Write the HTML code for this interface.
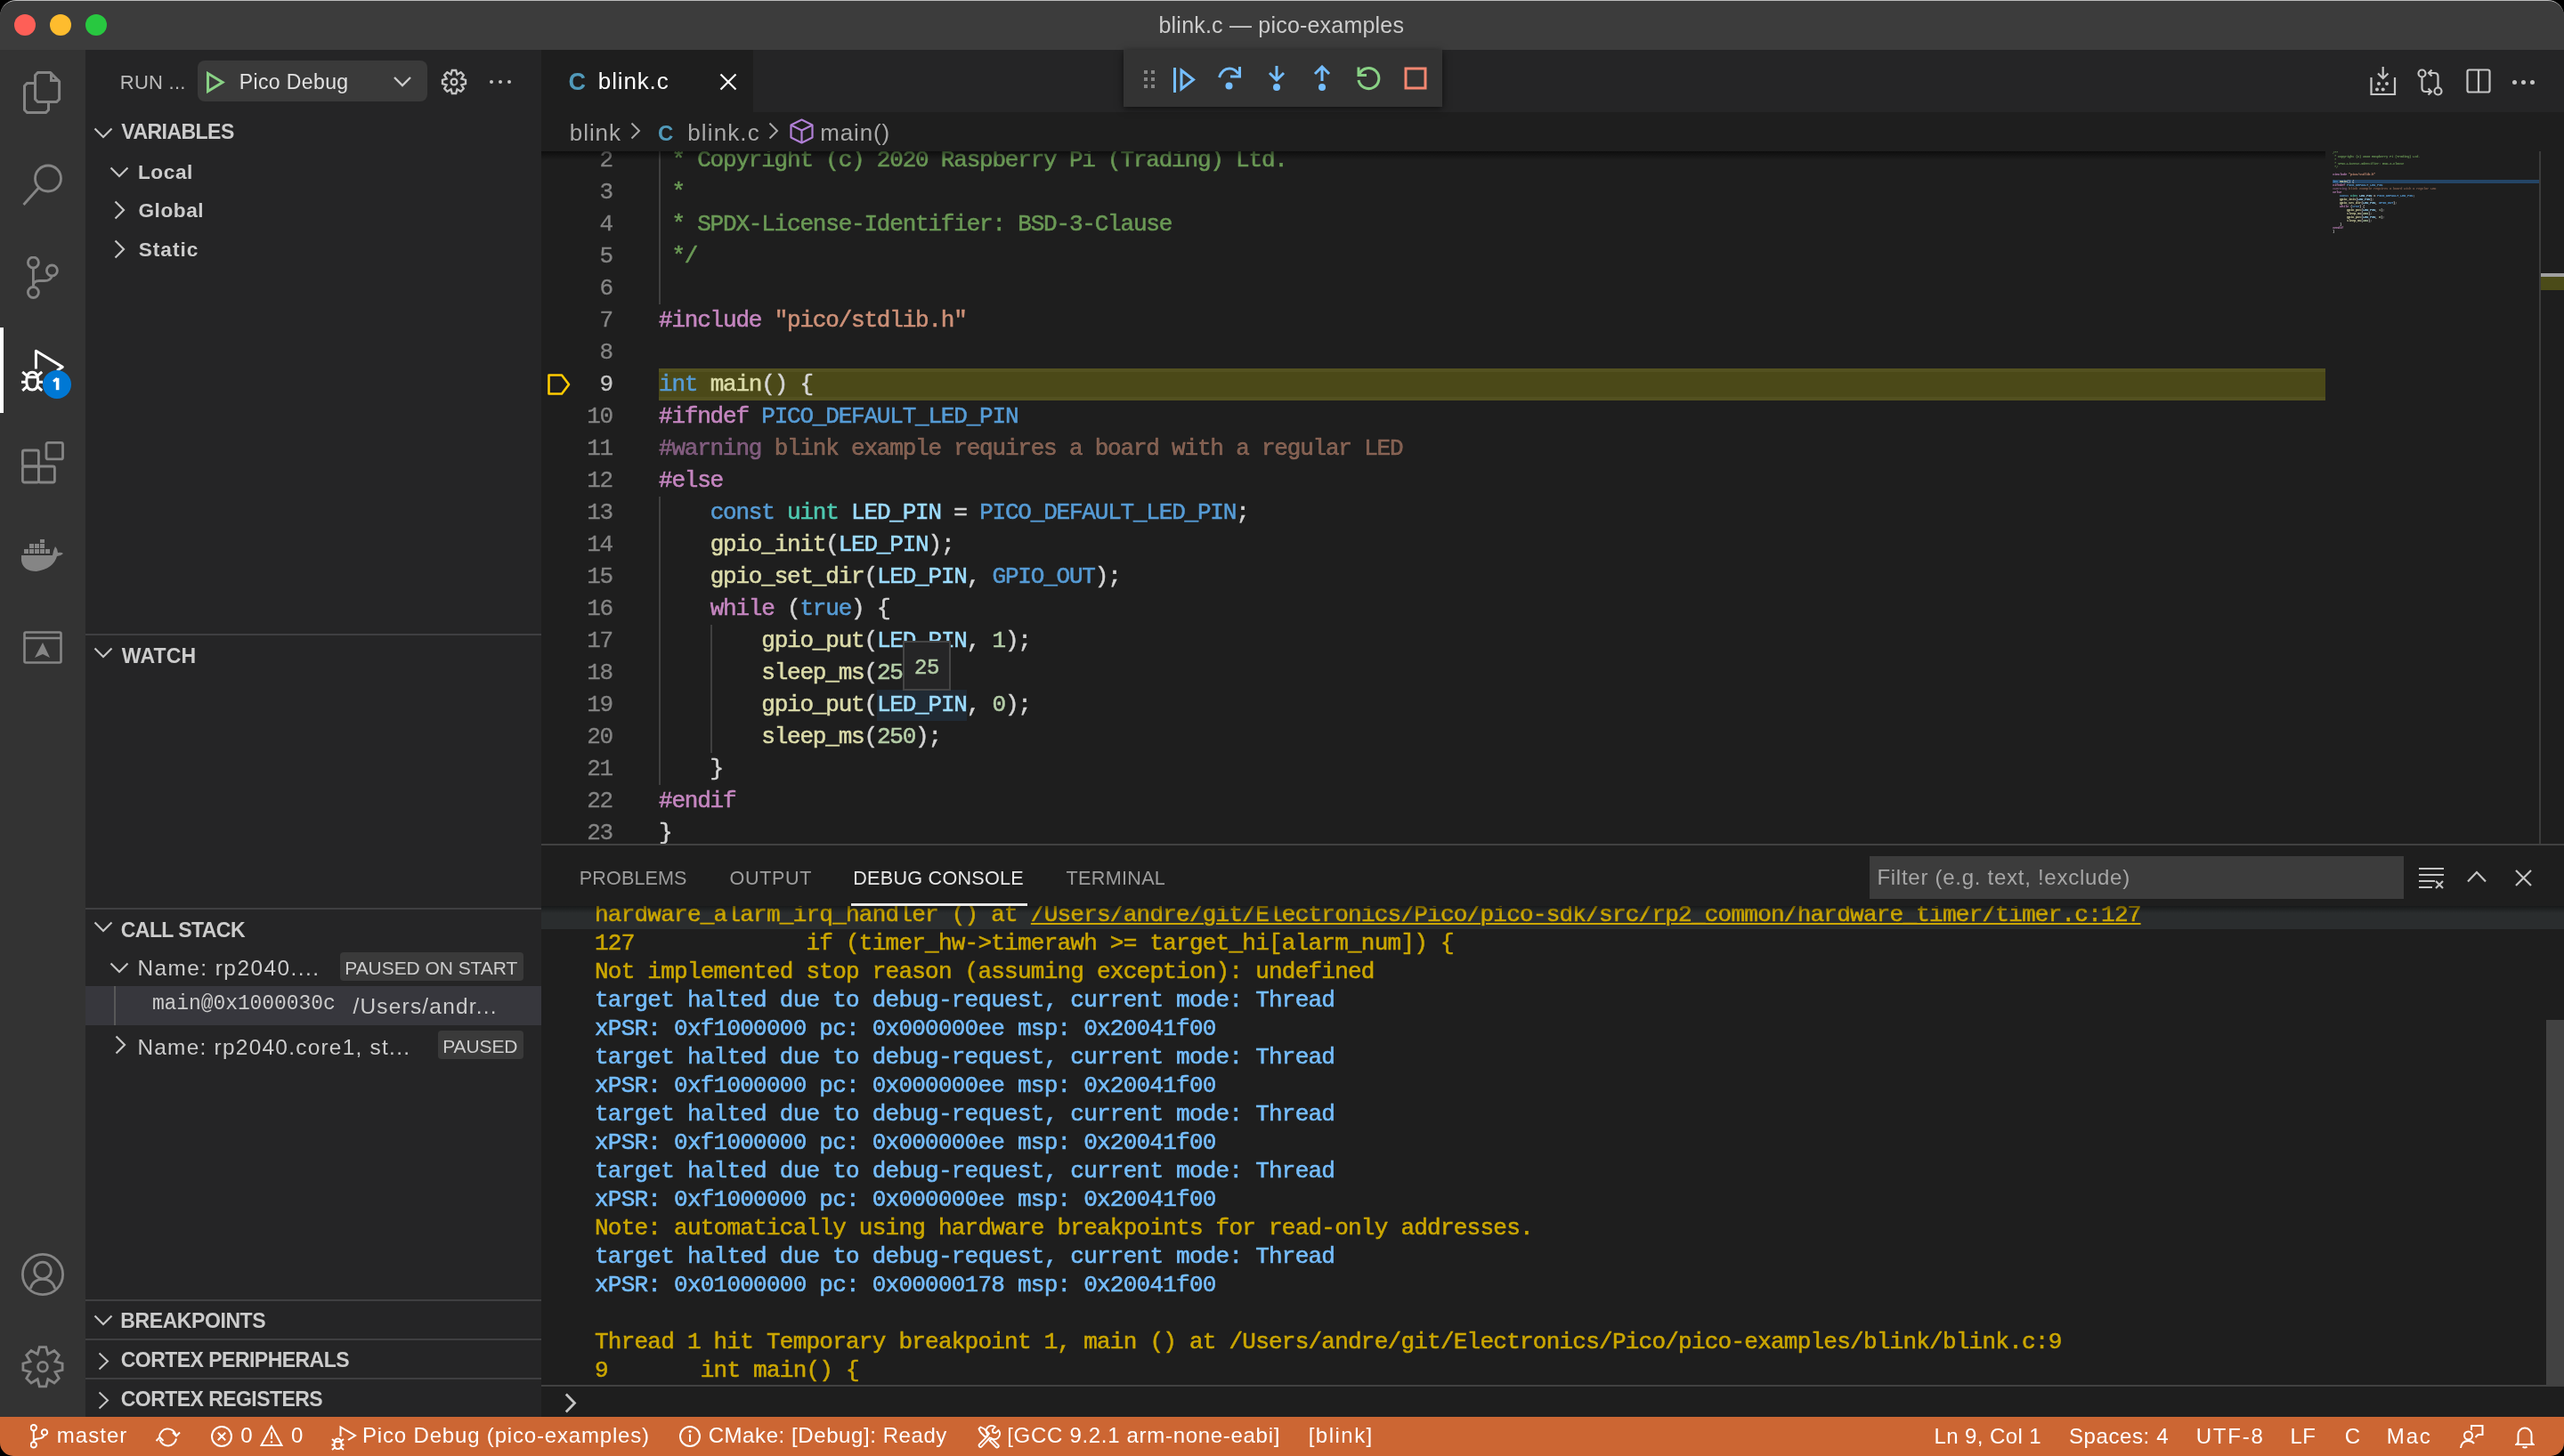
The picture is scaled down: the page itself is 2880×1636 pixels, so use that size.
<!DOCTYPE html>
<html><head><meta charset="utf-8"><title>blink.c — pico-examples</title>
<style>
html,body{margin:0;padding:0;background:#000;width:2880px;height:1636px;overflow:hidden;}
#win{will-change:transform;position:absolute;left:0;top:0;width:2880px;height:1636px;overflow:hidden;border-radius:18px 18px 15px 15px;background:#1e1e1e;}
#win div{box-sizing:border-box;}
</style></head><body><div id="win">
<div style="position:absolute;left:0px;top:0px;width:2880px;height:57px;background:#3c3c3c;"></div>
<div style="position:absolute;left:0;top:0;width:2880px;height:40px;border-top:1.6px solid #bcbcbc;border-radius:18px 18px 0 0;box-sizing:border-box;"></div>
<div style="position:absolute;left:0px;top:56px;width:2880px;height:1px;background:#2b2b2b;"></div>
<div style="position:absolute;left:16px;top:16px;width:24px;height:24px;border-radius:50%;background:#fe5f57;"></div>
<div style="position:absolute;left:56px;top:16px;width:24px;height:24px;border-radius:50%;background:#febc2e;"></div>
<div style="position:absolute;left:96px;top:16px;width:24px;height:24px;border-radius:50%;background:#28c840;"></div>
<div style="position:absolute;left:1301.50px;top:13.38px;font-family:'Liberation Sans', sans-serif;font-size:25px;line-height:30.12px;color:#cccccc;font-weight:normal;white-space:pre;letter-spacing:0.205px;">blink.c — pico-examples</div>
<div style="position:absolute;left:0px;top:56px;width:96px;height:1536px;background:#333333;"></div>
<svg style="position:absolute;left:24px;top:80px;" width="48" height="48" viewBox="0 0 48 48"><g fill="none" stroke="#858585" stroke-width="3" stroke-linejoin="miter">
<path d="M18.5 1.5 H32.5 L42.6 11.6 V31.5 L39.6 34.5 H18.5 L15.5 31.5 V4.5 Z"/>
<path d="M33.5 1.5 V10.5 H42.6"/>
<path d="M15.5 13.5 H6.5 L3.5 16.5 V43.5 L6.5 46.5 H27.5 L30.5 43.5 V34.5"/>
</g></svg>
<svg style="position:absolute;left:24px;top:184px;" width="48" height="48" viewBox="0 0 48 48"><g fill="none" stroke="#858585" stroke-width="2.8">
<circle cx="30" cy="16.5" r="14.5"/><path d="M19.5 27 L2.5 46" stroke-linecap="butt"/></g></svg>
<svg style="position:absolute;left:24px;top:288px;" width="48" height="48" viewBox="0 0 48 48"><g fill="none" stroke="#858585" stroke-width="2.8">
<circle cx="13.4" cy="7" r="6"/><circle cx="13.4" cy="40.5" r="6"/><circle cx="34.4" cy="16" r="6"/>
<path d="M13.4 13 V34.5"/><path d="M34.4 22 Q33 27.5 26 27.5 H20 Q13.4 27.5 13.4 33"/></g></svg>
<div style="position:absolute;left:0px;top:368px;width:4px;height:96px;background:#ffffff;"></div>
<svg style="position:absolute;left:24px;top:392px;" width="48" height="48" viewBox="0 0 48 48"><g fill="none" stroke="#ffffff" stroke-width="3" stroke-linejoin="round" stroke-linecap="butt">
<path d="M16.4 22.5 V2.2 L46.2 20.4 L40 24.2"/>
</g>
<g fill="none" stroke="#ffffff" stroke-width="3">
<path d="M5.8 36.5 Q5.8 26.2 12.2 26.2 Q18.6 26.2 18.6 36.5 Q18.6 46 12.2 46 Q5.8 46 5.8 36.5 Z"/>
<path d="M6.2 31.8 H18.2"/>
<path d="M0 37.3 H5.8 M18.6 37.3 H24 M1.2 25.8 L6.2 30.2 M23.2 25.8 L18.2 30.2 M1.2 46.8 L6.2 42.4 M23.2 46.8 L18.2 42.4"/>
</g></svg>
<div style="position:absolute;left:48.1px;top:416px;width:32px;height:32px;border-radius:50%;background:#0078d4;"></div>
<svg style="position:absolute;left:59px;top:424px;" width="9" height="15" viewBox="0 0 9 15"><path d="M5.6 0.8 V14.2" stroke="#ffffff" stroke-width="3.6" fill="none"/><path d="M1 4.6 L5.2 1.2" stroke="#ffffff" stroke-width="2.8" fill="none"/></svg>
<svg style="position:absolute;left:24px;top:496px;" width="48" height="48" viewBox="0 0 48 48"><g fill="none" stroke="#858585" stroke-width="2.8" stroke-linejoin="round">
<rect x="1.4" y="10" width="18" height="18" rx="2"/><rect x="1.4" y="28" width="18" height="18" rx="2"/><rect x="19.4" y="28" width="18" height="18" rx="2"/>
<rect x="28" y="1.4" width="18.5" height="18.5" rx="2"/></g></svg>
<svg style="position:absolute;left:23px;top:606px;" width="50" height="38" viewBox="0 0 50 38"><g fill="#858585">
<rect x="4" y="11" width="5" height="5"/><rect x="10" y="11" width="5" height="5"/><rect x="16" y="11" width="5" height="5"/><rect x="22" y="11" width="5" height="5"/><rect x="28" y="11" width="5" height="5"/>
<rect x="10" y="5" width="5" height="5"/><rect x="16" y="5" width="5" height="5"/><rect x="22" y="5" width="5" height="5"/><rect x="22" y="-1" width="5" height="5"/>
<path d="M1 18 H36 Q37 12 39 8 Q42 11 42 15 Q46 14 48 16 Q45 19 41 19 Q37 33 18 36 Q3 36 1 24 Z"/></g></svg>
<svg style="position:absolute;left:26px;top:709px;" width="46" height="38" viewBox="0 0 46 38"><g fill="none" stroke="#858585" stroke-width="2.6">
<rect x="1.5" y="1.5" width="41" height="34" rx="1.5"/><path d="M1.5 8 H42.5"/></g>
<path d="M22 13 L30 30 L22 26 L13 30 Z" fill="#858585"/></svg>
<svg style="position:absolute;left:24px;top:1408px;" width="48" height="48" viewBox="0 0 48 48"><g fill="none" stroke="#858585" stroke-width="2.8">
<circle cx="24" cy="24" r="22.6"/><circle cx="24" cy="19.5" r="9.3"/><path d="M10.2 40 Q13 29.4 24 29.4 Q35 29.4 37.8 40"/></g></svg>
<svg style="position:absolute;left:24px;top:1512px;" width="48" height="48" viewBox="0 0 48 48"><g fill="none" stroke="#858585" stroke-width="2.8" stroke-linejoin="miter" stroke-miterlimit="6">
<path d="M20.30 1.61 L27.70 1.61 L29.82 9.66 L37.01 5.46 L42.24 10.69 L38.04 17.88 L46.09 20.00 L46.09 27.40 L38.04 29.52 L42.24 36.71 L37.01 41.94 L29.82 37.74 L27.70 45.79 L20.30 45.79 L18.18 37.74 L10.99 41.94 L5.76 36.71 L9.96 29.52 L1.91 27.40 L1.91 20.00 L9.96 17.88 L5.76 10.69 L10.99 5.46 L18.18 9.66 Z"/>
<circle cx="24" cy="23.7" r="5.4"/></g></svg>
<div style="position:absolute;left:96px;top:56px;width:512px;height:1536px;background:#252526;"></div>
<div style="position:absolute;left:134.85px;top:79.69px;font-family:'Liberation Sans', sans-serif;font-size:22px;line-height:26.51px;color:#bbbbbb;font-weight:normal;white-space:pre;letter-spacing:0.233px;">RUN ...</div>
<div style="position:absolute;left:222px;top:68px;width:258px;height:46px;border-radius:8px;background:#3a3a3a;"></div>
<svg style="position:absolute;left:231px;top:80px;" width="22" height="26" viewBox="0 0 22 26"><path d="M2.5 2.5 L19 12.5 L2.5 22.5 Z" fill="none" stroke="#89d185" stroke-width="3" stroke-linejoin="miter"/></svg>
<div style="position:absolute;left:268.65px;top:78.78px;font-family:'Liberation Sans', sans-serif;font-size:23px;line-height:27.71px;color:#e2e2e2;font-weight:normal;white-space:pre;letter-spacing:0.400px;">Pico Debug</div>
<svg style="position:absolute;left:442px;top:86px;" width="20" height="12" viewBox="0 0 20 12"><path d="M1 1 L10 10 L19 1" fill="none" stroke="#cccccc" stroke-width="2.4"/></svg>
<svg style="position:absolute;left:495px;top:77px;" width="30" height="30" viewBox="0 0 30 30"><g fill="none" stroke="#c5c5c5" stroke-width="2.3" stroke-linejoin="miter" stroke-miterlimit="6">
<path d="M12.82 1.98 L17.18 1.98 L18.44 6.69 L22.67 4.25 L25.75 7.33 L23.31 11.56 L28.02 12.82 L28.02 17.18 L23.31 18.44 L25.75 22.67 L22.67 25.75 L18.44 23.31 L17.18 28.02 L12.82 28.02 L11.56 23.31 L7.33 25.75 L4.25 22.67 L6.69 18.44 L1.98 17.18 L1.98 12.82 L6.69 11.56 L4.25 7.33 L7.33 4.25 L11.56 6.69 Z"/>
<circle cx="15" cy="15" r="3.4"/></g></svg>
<div style="position:absolute;left:549.7px;top:89.7px;width:4.6px;height:4.6px;border-radius:50%;background:#c5c5c5;"></div>
<div style="position:absolute;left:559.7px;top:89.7px;width:4.6px;height:4.6px;border-radius:50%;background:#c5c5c5;"></div>
<div style="position:absolute;left:569.7px;top:89.7px;width:4.6px;height:4.6px;border-radius:50%;background:#c5c5c5;"></div>
<svg style="position:absolute;left:105px;top:143px;" width="22" height="14" viewBox="0 0 22 14"><path d="M1.5 1.5 L11 11 L20.5 1.5" fill="none" stroke="#c5c5c5" stroke-width="2.2"/></svg>
<div style="position:absolute;left:136.35px;top:135.19px;font-family:'Liberation Sans', sans-serif;font-size:23px;line-height:27.71px;color:#cccccc;font-weight:bold;white-space:pre;letter-spacing:-0.537px;">VARIABLES</div>
<svg style="position:absolute;left:123px;top:187px;" width="22" height="14" viewBox="0 0 22 14"><path d="M1.5 1.5 L11 11 L20.5 1.5" fill="none" stroke="#c5c5c5" stroke-width="2.2"/></svg>
<div style="position:absolute;left:154.90px;top:179.55px;font-family:'Liberation Sans', sans-serif;font-size:22.6px;line-height:27.23px;color:#cccccc;font-weight:bold;white-space:pre;letter-spacing:0.612px;">Local</div>
<svg style="position:absolute;left:128px;top:225px;" width="14" height="22" viewBox="0 0 14 22"><path d="M1.5 1.5 L11 11 L1.5 20.5" fill="none" stroke="#c5c5c5" stroke-width="2.2"/></svg>
<div style="position:absolute;left:155.40px;top:223.15px;font-family:'Liberation Sans', sans-serif;font-size:22.6px;line-height:27.23px;color:#cccccc;font-weight:bold;white-space:pre;letter-spacing:0.580px;">Global</div>
<svg style="position:absolute;left:128px;top:269px;" width="14" height="22" viewBox="0 0 14 22"><path d="M1.5 1.5 L11 11 L1.5 20.5" fill="none" stroke="#c5c5c5" stroke-width="2.2"/></svg>
<div style="position:absolute;left:155.65px;top:267.35px;font-family:'Liberation Sans', sans-serif;font-size:22.6px;line-height:27.23px;color:#cccccc;font-weight:bold;white-space:pre;letter-spacing:1.030px;">Static</div>
<div style="position:absolute;left:96px;top:712px;width:512px;height:2px;background:#3f3f41;"></div>
<svg style="position:absolute;left:105px;top:727px;" width="22" height="14" viewBox="0 0 22 14"><path d="M1.5 1.5 L11 11 L20.5 1.5" fill="none" stroke="#c5c5c5" stroke-width="2.2"/></svg>
<div style="position:absolute;left:136.80px;top:723.58px;font-family:'Liberation Sans', sans-serif;font-size:23px;line-height:27.71px;color:#cccccc;font-weight:bold;white-space:pre;letter-spacing:0.175px;">WATCH</div>
<div style="position:absolute;left:96px;top:1020px;width:512px;height:2px;background:#3f3f41;"></div>
<svg style="position:absolute;left:105px;top:1035px;" width="22" height="14" viewBox="0 0 22 14"><path d="M1.5 1.5 L11 11 L20.5 1.5" fill="none" stroke="#c5c5c5" stroke-width="2.2"/></svg>
<div style="position:absolute;left:135.80px;top:1031.59px;font-family:'Liberation Sans', sans-serif;font-size:23px;line-height:27.71px;color:#cccccc;font-weight:bold;white-space:pre;letter-spacing:-0.567px;">CALL STACK</div>
<svg style="position:absolute;left:123px;top:1081px;" width="22" height="14" viewBox="0 0 22 14"><path d="M1.5 1.5 L11 11 L20.5 1.5" fill="none" stroke="#c5c5c5" stroke-width="2.2"/></svg>
<div style="position:absolute;left:154.40px;top:1073.42px;font-family:'Liberation Sans', sans-serif;font-size:24.4px;line-height:29.40px;color:#cccccc;font-weight:normal;white-space:pre;letter-spacing:1.463px;">Name: rp2040....</div>
<div style="position:absolute;left:382px;top:1070px;width:206px;height:32px;border-radius:4px;background:#3a3a3a;"></div>
<div style="position:absolute;left:387.25px;top:1074.99px;font-family:'Liberation Sans', sans-serif;font-size:21px;line-height:25.30px;color:#cccccc;font-weight:normal;white-space:pre;letter-spacing:-0.057px;">PAUSED ON START</div>
<div style="position:absolute;left:96px;top:1108px;width:512px;height:44px;background:#37373d;"></div>
<div style="position:absolute;left:128px;top:1108px;width:2px;height:44px;background:#585858;"></div>
<div style="position:absolute;left:170.90px;top:1115.04px;font-family:'Liberation Mono', monospace;font-size:23px;line-height:26.06px;color:#cccccc;font-weight:normal;white-space:pre;letter-spacing:-0.089px;">main@0x1000030c</div>
<div style="position:absolute;left:396.50px;top:1116.42px;font-family:'Liberation Sans', sans-serif;font-size:24.4px;line-height:29.40px;color:#cccccc;font-weight:normal;white-space:pre;letter-spacing:1.231px;">/Users/andr...</div>
<svg style="position:absolute;left:129px;top:1163px;" width="14" height="22" viewBox="0 0 14 22"><path d="M1.5 1.5 L11 11 L1.5 20.5" fill="none" stroke="#c5c5c5" stroke-width="2.2"/></svg>
<div style="position:absolute;left:154.40px;top:1161.92px;font-family:'Liberation Sans', sans-serif;font-size:24.4px;line-height:29.40px;color:#cccccc;font-weight:normal;white-space:pre;letter-spacing:1.265px;">Name: rp2040.core1, st...</div>
<div style="position:absolute;left:492px;top:1158px;width:96px;height:32px;border-radius:4px;background:#3a3a3a;"></div>
<div style="position:absolute;left:497.25px;top:1162.99px;font-family:'Liberation Sans', sans-serif;font-size:21px;line-height:25.30px;color:#cccccc;font-weight:normal;white-space:pre;letter-spacing:-0.110px;">PAUSED</div>
<div style="position:absolute;left:96px;top:1460px;width:512px;height:2px;background:#3f3f41;"></div>
<svg style="position:absolute;left:105px;top:1477px;" width="22" height="14" viewBox="0 0 22 14"><path d="M1.5 1.5 L11 11 L20.5 1.5" fill="none" stroke="#c5c5c5" stroke-width="2.2"/></svg>
<div style="position:absolute;left:135.30px;top:1471.18px;font-family:'Liberation Sans', sans-serif;font-size:23px;line-height:27.71px;color:#cccccc;font-weight:bold;white-space:pre;letter-spacing:-0.410px;">BREAKPOINTS</div>
<div style="position:absolute;left:96px;top:1504px;width:512px;height:2px;background:#3f3f41;"></div>
<svg style="position:absolute;left:110px;top:1519px;" width="13" height="21" viewBox="0 0 13 21"><path d="M1.5 1.5 L11 10.5 L1.5 19.5" fill="none" stroke="#c5c5c5" stroke-width="2"/></svg>
<div style="position:absolute;left:135.80px;top:1515.18px;font-family:'Liberation Sans', sans-serif;font-size:23px;line-height:27.71px;color:#cccccc;font-weight:bold;white-space:pre;letter-spacing:-0.535px;">CORTEX PERIPHERALS</div>
<div style="position:absolute;left:96px;top:1548px;width:512px;height:2px;background:#3f3f41;"></div>
<svg style="position:absolute;left:110px;top:1563px;" width="13" height="21" viewBox="0 0 13 21"><path d="M1.5 1.5 L11 10.5 L1.5 19.5" fill="none" stroke="#c5c5c5" stroke-width="2"/></svg>
<div style="position:absolute;left:135.80px;top:1559.18px;font-family:'Liberation Sans', sans-serif;font-size:23px;line-height:27.71px;color:#cccccc;font-weight:bold;white-space:pre;letter-spacing:-0.557px;">CORTEX REGISTERS</div>
<div style="position:absolute;left:608px;top:56px;width:2272px;height:892px;background:#1e1e1e;"></div>
<div style="position:absolute;left:608px;top:56px;width:2272px;height:70px;background:#252526;"></div>
<div style="position:absolute;left:608px;top:56px;width:238px;height:70px;background:#1e1e1e;"></div>
<div style="position:absolute;left:638.50px;top:75.97px;font-family:'Liberation Sans', sans-serif;font-size:27px;line-height:32.54px;color:#519aba;font-weight:bold;white-space:pre;letter-spacing:-1.650px;">C</div>
<div style="position:absolute;left:671.85px;top:76.47px;font-family:'Liberation Sans', sans-serif;font-size:26px;line-height:31.33px;color:#ffffff;font-weight:normal;white-space:pre;letter-spacing:0.858px;">blink.c</div>
<svg style="position:absolute;left:808px;top:82px;" width="20" height="20" viewBox="0 0 20 20"><path d="M1.5 1.5 L18.5 18.5 M18.5 1.5 L1.5 18.5" fill="none" stroke="#ffffff" stroke-width="2.2"/></svg>
<svg style="position:absolute;left:2662px;top:74px;" width="30" height="34" viewBox="0 0 30 34"><g fill="none" stroke="#c5c5c5" stroke-width="2.2">
<path d="M1.5 13 V32 H28 V13"/><path d="M14.7 1 V14 M9 8.5 L14.7 14 L20.5 8.5"/></g>
<g fill="#c5c5c5"><circle cx="10" cy="20" r="2"/><circle cx="19" cy="20" r="2"/><circle cx="8" cy="26.5" r="2"/><circle cx="14.7" cy="26.5" r="2"/></g></svg>
<svg style="position:absolute;left:2715px;top:77px;" width="30" height="32" viewBox="0 0 30 32"><g fill="none" stroke="#c5c5c5" stroke-width="2.2">
<circle cx="5.5" cy="5.5" r="4"/><circle cx="23.5" cy="25.5" r="4"/>
<path d="M5.5 9.5 V22 Q5.5 26 9.5 26 H16 M12.5 22.5 L16 26 L12.5 29.5"/>
<path d="M23.5 21.5 V9 Q23.5 5 19.5 5 H13 M16.5 1.5 L13 5 L16.5 8.5"/></g></svg>
<svg style="position:absolute;left:2770px;top:77px;" width="28" height="28" viewBox="0 0 28 28"><g fill="none" stroke="#c5c5c5" stroke-width="2.2"><rect x="1.5" y="1.5" width="25" height="25" rx="2"/><path d="M14 1.5 V26.5"/></g></svg>
<div style="position:absolute;left:2821.5px;top:89.5px;width:5px;height:5px;border-radius:50%;background:#c5c5c5;"></div>
<div style="position:absolute;left:2831.5px;top:89.5px;width:5px;height:5px;border-radius:50%;background:#c5c5c5;"></div>
<div style="position:absolute;left:2841.5px;top:89.5px;width:5px;height:5px;border-radius:50%;background:#c5c5c5;"></div>
<div style="position:absolute;left:639.85px;top:134.47px;font-family:'Liberation Sans', sans-serif;font-size:26px;line-height:31.33px;color:#a9a9a9;font-weight:normal;white-space:pre;letter-spacing:0.912px;">blink</div>
<svg style="position:absolute;left:708px;top:137px;" width="12" height="20" viewBox="0 0 12 20"><path d="M1.5 1.5 L10 10 L1.5 18.5" fill="none" stroke="#a9a9a9" stroke-width="2"/></svg>
<div style="position:absolute;left:739.00px;top:136.28px;font-family:'Liberation Sans', sans-serif;font-size:24px;line-height:28.92px;color:#519aba;font-weight:bold;white-space:pre;letter-spacing:0.950px;">C</div>
<div style="position:absolute;left:772.25px;top:134.47px;font-family:'Liberation Sans', sans-serif;font-size:26px;line-height:31.33px;color:#a9a9a9;font-weight:normal;white-space:pre;letter-spacing:1.125px;">blink.c</div>
<svg style="position:absolute;left:863px;top:137px;" width="12" height="20" viewBox="0 0 12 20"><path d="M1.5 1.5 L10 10 L1.5 18.5" fill="none" stroke="#a9a9a9" stroke-width="2"/></svg>
<svg style="position:absolute;left:887px;top:133px;" width="27" height="29" viewBox="0 0 27 29"><g fill="none" stroke="#b180d7" stroke-width="2.2" stroke-linejoin="round">
<path d="M13.5 1.5 L25.5 7.5 V21.5 L13.5 27.5 L1.5 21.5 V7.5 Z"/><path d="M1.5 7.5 L13.5 13.5 L25.5 7.5 M13.5 13.5 V27.5"/></g></svg>
<div style="position:absolute;left:921.25px;top:134.47px;font-family:'Liberation Sans', sans-serif;font-size:26px;line-height:31.33px;color:#a9a9a9;font-weight:normal;white-space:pre;letter-spacing:0.830px;">main()</div>
<div style="position:absolute;left:608px;top:170px;width:2004px;height:778px;overflow:hidden;">
<div style="position:absolute;left:132px;top:244px;width:1872px;height:36px;background:#4b4918;border-top:4px solid #535120;border-bottom:4px solid #535120;box-sizing:border-box;"></div>
<div style="position:absolute;left:376.8px;top:605px;width:100.8px;height:35px;background:#202a34;"></div>
<div style="position:absolute;left:132px;top:0px;width:2px;height:172px;background:#404040;"></div>
<div style="position:absolute;left:132px;top:388px;width:2px;height:324px;background:#404040;"></div>
<div style="position:absolute;left:189.6px;top:532px;width:2px;height:144px;background:#404040;"></div>
<div style="position:absolute;left:0px;top:-3.66px;width:80px;text-align:right;font-family:'Liberation Mono', monospace;-webkit-text-stroke-width:0.3px;font-size:26px;line-height:29.46px;letter-spacing:-1.2px;color:#858585;white-space:pre;">2<span style="letter-spacing:0">​</span></div>
<div style="position:absolute;left:132px;top:-3.66px;font-family:'Liberation Mono', monospace;-webkit-text-stroke-width:0.55px;font-size:26px;line-height:29.46px;letter-spacing:-1.2px;white-space:pre;"><span style="color:#6a9955"> * Copyright (c) 2020 Raspberry Pi (Trading) Ltd.</span></div>
<div style="position:absolute;left:0px;top:32.34px;width:80px;text-align:right;font-family:'Liberation Mono', monospace;-webkit-text-stroke-width:0.3px;font-size:26px;line-height:29.46px;letter-spacing:-1.2px;color:#858585;white-space:pre;">3<span style="letter-spacing:0">​</span></div>
<div style="position:absolute;left:132px;top:32.34px;font-family:'Liberation Mono', monospace;-webkit-text-stroke-width:0.55px;font-size:26px;line-height:29.46px;letter-spacing:-1.2px;white-space:pre;"><span style="color:#6a9955"> *</span></div>
<div style="position:absolute;left:0px;top:68.34px;width:80px;text-align:right;font-family:'Liberation Mono', monospace;-webkit-text-stroke-width:0.3px;font-size:26px;line-height:29.46px;letter-spacing:-1.2px;color:#858585;white-space:pre;">4<span style="letter-spacing:0">​</span></div>
<div style="position:absolute;left:132px;top:68.34px;font-family:'Liberation Mono', monospace;-webkit-text-stroke-width:0.55px;font-size:26px;line-height:29.46px;letter-spacing:-1.2px;white-space:pre;"><span style="color:#6a9955"> * SPDX-License-Identifier: BSD-3-Clause</span></div>
<div style="position:absolute;left:0px;top:104.34px;width:80px;text-align:right;font-family:'Liberation Mono', monospace;-webkit-text-stroke-width:0.3px;font-size:26px;line-height:29.46px;letter-spacing:-1.2px;color:#858585;white-space:pre;">5<span style="letter-spacing:0">​</span></div>
<div style="position:absolute;left:132px;top:104.34px;font-family:'Liberation Mono', monospace;-webkit-text-stroke-width:0.55px;font-size:26px;line-height:29.46px;letter-spacing:-1.2px;white-space:pre;"><span style="color:#6a9955"> */</span></div>
<div style="position:absolute;left:0px;top:140.34px;width:80px;text-align:right;font-family:'Liberation Mono', monospace;-webkit-text-stroke-width:0.3px;font-size:26px;line-height:29.46px;letter-spacing:-1.2px;color:#858585;white-space:pre;">6<span style="letter-spacing:0">​</span></div>
<div style="position:absolute;left:132px;top:140.34px;font-family:'Liberation Mono', monospace;-webkit-text-stroke-width:0.55px;font-size:26px;line-height:29.46px;letter-spacing:-1.2px;white-space:pre;"></div>
<div style="position:absolute;left:0px;top:176.34px;width:80px;text-align:right;font-family:'Liberation Mono', monospace;-webkit-text-stroke-width:0.3px;font-size:26px;line-height:29.46px;letter-spacing:-1.2px;color:#858585;white-space:pre;">7<span style="letter-spacing:0">​</span></div>
<div style="position:absolute;left:132px;top:176.34px;font-family:'Liberation Mono', monospace;-webkit-text-stroke-width:0.55px;font-size:26px;line-height:29.46px;letter-spacing:-1.2px;white-space:pre;"><span style="color:#c586c0">#include</span><span style="color:#d4d4d4"> </span><span style="color:#ce9178">&quot;pico/stdlib.h&quot;</span></div>
<div style="position:absolute;left:0px;top:212.34px;width:80px;text-align:right;font-family:'Liberation Mono', monospace;-webkit-text-stroke-width:0.3px;font-size:26px;line-height:29.46px;letter-spacing:-1.2px;color:#858585;white-space:pre;">8<span style="letter-spacing:0">​</span></div>
<div style="position:absolute;left:132px;top:212.34px;font-family:'Liberation Mono', monospace;-webkit-text-stroke-width:0.55px;font-size:26px;line-height:29.46px;letter-spacing:-1.2px;white-space:pre;"></div>
<div style="position:absolute;left:0px;top:248.34px;width:80px;text-align:right;font-family:'Liberation Mono', monospace;-webkit-text-stroke-width:0.3px;font-size:26px;line-height:29.46px;letter-spacing:-1.2px;color:#c6c6c6;white-space:pre;">9<span style="letter-spacing:0">​</span></div>
<div style="position:absolute;left:132px;top:248.34px;font-family:'Liberation Mono', monospace;-webkit-text-stroke-width:0.55px;font-size:26px;line-height:29.46px;letter-spacing:-1.2px;white-space:pre;"><span style="color:#569cd6">int</span><span style="color:#d4d4d4"> </span><span style="color:#dcdcaa">main</span><span style="color:#d4d4d4">() {</span></div>
<div style="position:absolute;left:0px;top:284.34px;width:80px;text-align:right;font-family:'Liberation Mono', monospace;-webkit-text-stroke-width:0.3px;font-size:26px;line-height:29.46px;letter-spacing:-1.2px;color:#858585;white-space:pre;">10<span style="letter-spacing:0">​</span></div>
<div style="position:absolute;left:132px;top:284.34px;font-family:'Liberation Mono', monospace;-webkit-text-stroke-width:0.55px;font-size:26px;line-height:29.46px;letter-spacing:-1.2px;white-space:pre;"><span style="color:#c586c0">#ifndef</span><span style="color:#d4d4d4"> </span><span style="color:#569cd6">PICO_DEFAULT_LED_PIN</span></div>
<div style="position:absolute;left:0px;top:320.34px;width:80px;text-align:right;font-family:'Liberation Mono', monospace;-webkit-text-stroke-width:0.3px;font-size:26px;line-height:29.46px;letter-spacing:-1.2px;color:#858585;white-space:pre;">11<span style="letter-spacing:0">​</span></div>
<div style="position:absolute;left:132px;top:320.34px;font-family:'Liberation Mono', monospace;-webkit-text-stroke-width:0.55px;font-size:26px;line-height:29.46px;letter-spacing:-1.2px;white-space:pre;"><span style="color:rgba(197,134,192,0.55)">#warning</span><span style="color:#d4d4d4"> </span><span style="color:rgba(206,145,120,0.55)">blink example requires a board with a regular LED</span></div>
<div style="position:absolute;left:0px;top:356.34px;width:80px;text-align:right;font-family:'Liberation Mono', monospace;-webkit-text-stroke-width:0.3px;font-size:26px;line-height:29.46px;letter-spacing:-1.2px;color:#858585;white-space:pre;">12<span style="letter-spacing:0">​</span></div>
<div style="position:absolute;left:132px;top:356.34px;font-family:'Liberation Mono', monospace;-webkit-text-stroke-width:0.55px;font-size:26px;line-height:29.46px;letter-spacing:-1.2px;white-space:pre;"><span style="color:#c586c0">#else</span></div>
<div style="position:absolute;left:0px;top:392.34px;width:80px;text-align:right;font-family:'Liberation Mono', monospace;-webkit-text-stroke-width:0.3px;font-size:26px;line-height:29.46px;letter-spacing:-1.2px;color:#858585;white-space:pre;">13<span style="letter-spacing:0">​</span></div>
<div style="position:absolute;left:132px;top:392.34px;font-family:'Liberation Mono', monospace;-webkit-text-stroke-width:0.55px;font-size:26px;line-height:29.46px;letter-spacing:-1.2px;white-space:pre;"><span style="color:#d4d4d4">    </span><span style="color:#569cd6">const</span><span style="color:#d4d4d4"> </span><span style="color:#4ec9b0">uint</span><span style="color:#d4d4d4"> </span><span style="color:#9cdcfe">LED_PIN</span><span style="color:#d4d4d4"> = </span><span style="color:#569cd6">PICO_DEFAULT_LED_PIN</span><span style="color:#d4d4d4">;</span></div>
<div style="position:absolute;left:0px;top:428.34px;width:80px;text-align:right;font-family:'Liberation Mono', monospace;-webkit-text-stroke-width:0.3px;font-size:26px;line-height:29.46px;letter-spacing:-1.2px;color:#858585;white-space:pre;">14<span style="letter-spacing:0">​</span></div>
<div style="position:absolute;left:132px;top:428.34px;font-family:'Liberation Mono', monospace;-webkit-text-stroke-width:0.55px;font-size:26px;line-height:29.46px;letter-spacing:-1.2px;white-space:pre;"><span style="color:#d4d4d4">    </span><span style="color:#dcdcaa">gpio_init</span><span style="color:#d4d4d4">(</span><span style="color:#9cdcfe">LED_PIN</span><span style="color:#d4d4d4">);</span></div>
<div style="position:absolute;left:0px;top:464.34px;width:80px;text-align:right;font-family:'Liberation Mono', monospace;-webkit-text-stroke-width:0.3px;font-size:26px;line-height:29.46px;letter-spacing:-1.2px;color:#858585;white-space:pre;">15<span style="letter-spacing:0">​</span></div>
<div style="position:absolute;left:132px;top:464.34px;font-family:'Liberation Mono', monospace;-webkit-text-stroke-width:0.55px;font-size:26px;line-height:29.46px;letter-spacing:-1.2px;white-space:pre;"><span style="color:#d4d4d4">    </span><span style="color:#dcdcaa">gpio_set_dir</span><span style="color:#d4d4d4">(</span><span style="color:#9cdcfe">LED_PIN</span><span style="color:#d4d4d4">, </span><span style="color:#569cd6">GPIO_OUT</span><span style="color:#d4d4d4">);</span></div>
<div style="position:absolute;left:0px;top:500.34px;width:80px;text-align:right;font-family:'Liberation Mono', monospace;-webkit-text-stroke-width:0.3px;font-size:26px;line-height:29.46px;letter-spacing:-1.2px;color:#858585;white-space:pre;">16<span style="letter-spacing:0">​</span></div>
<div style="position:absolute;left:132px;top:500.34px;font-family:'Liberation Mono', monospace;-webkit-text-stroke-width:0.55px;font-size:26px;line-height:29.46px;letter-spacing:-1.2px;white-space:pre;"><span style="color:#d4d4d4">    </span><span style="color:#c586c0">while</span><span style="color:#d4d4d4"> (</span><span style="color:#569cd6">true</span><span style="color:#d4d4d4">) {</span></div>
<div style="position:absolute;left:0px;top:536.34px;width:80px;text-align:right;font-family:'Liberation Mono', monospace;-webkit-text-stroke-width:0.3px;font-size:26px;line-height:29.46px;letter-spacing:-1.2px;color:#858585;white-space:pre;">17<span style="letter-spacing:0">​</span></div>
<div style="position:absolute;left:132px;top:536.34px;font-family:'Liberation Mono', monospace;-webkit-text-stroke-width:0.55px;font-size:26px;line-height:29.46px;letter-spacing:-1.2px;white-space:pre;"><span style="color:#d4d4d4">        </span><span style="color:#dcdcaa">gpio_put</span><span style="color:#d4d4d4">(</span><span style="color:#9cdcfe">LED_PIN</span><span style="color:#d4d4d4">, </span><span style="color:#b5cea8">1</span><span style="color:#d4d4d4">);</span></div>
<div style="position:absolute;left:0px;top:572.34px;width:80px;text-align:right;font-family:'Liberation Mono', monospace;-webkit-text-stroke-width:0.3px;font-size:26px;line-height:29.46px;letter-spacing:-1.2px;color:#858585;white-space:pre;">18<span style="letter-spacing:0">​</span></div>
<div style="position:absolute;left:132px;top:572.34px;font-family:'Liberation Mono', monospace;-webkit-text-stroke-width:0.55px;font-size:26px;line-height:29.46px;letter-spacing:-1.2px;white-space:pre;"><span style="color:#d4d4d4">        </span><span style="color:#dcdcaa">sleep_ms</span><span style="color:#d4d4d4">(</span><span style="color:#b5cea8">250</span><span style="color:#d4d4d4">);</span></div>
<div style="position:absolute;left:0px;top:608.34px;width:80px;text-align:right;font-family:'Liberation Mono', monospace;-webkit-text-stroke-width:0.3px;font-size:26px;line-height:29.46px;letter-spacing:-1.2px;color:#858585;white-space:pre;">19<span style="letter-spacing:0">​</span></div>
<div style="position:absolute;left:132px;top:608.34px;font-family:'Liberation Mono', monospace;-webkit-text-stroke-width:0.55px;font-size:26px;line-height:29.46px;letter-spacing:-1.2px;white-space:pre;"><span style="color:#d4d4d4">        </span><span style="color:#dcdcaa">gpio_put</span><span style="color:#d4d4d4">(</span><span style="color:#9cdcfe">LED_PIN</span><span style="color:#d4d4d4">, </span><span style="color:#b5cea8">0</span><span style="color:#d4d4d4">);</span></div>
<div style="position:absolute;left:0px;top:644.34px;width:80px;text-align:right;font-family:'Liberation Mono', monospace;-webkit-text-stroke-width:0.3px;font-size:26px;line-height:29.46px;letter-spacing:-1.2px;color:#858585;white-space:pre;">20<span style="letter-spacing:0">​</span></div>
<div style="position:absolute;left:132px;top:644.34px;font-family:'Liberation Mono', monospace;-webkit-text-stroke-width:0.55px;font-size:26px;line-height:29.46px;letter-spacing:-1.2px;white-space:pre;"><span style="color:#d4d4d4">        </span><span style="color:#dcdcaa">sleep_ms</span><span style="color:#d4d4d4">(</span><span style="color:#b5cea8">250</span><span style="color:#d4d4d4">);</span></div>
<div style="position:absolute;left:0px;top:680.34px;width:80px;text-align:right;font-family:'Liberation Mono', monospace;-webkit-text-stroke-width:0.3px;font-size:26px;line-height:29.46px;letter-spacing:-1.2px;color:#858585;white-space:pre;">21<span style="letter-spacing:0">​</span></div>
<div style="position:absolute;left:132px;top:680.34px;font-family:'Liberation Mono', monospace;-webkit-text-stroke-width:0.55px;font-size:26px;line-height:29.46px;letter-spacing:-1.2px;white-space:pre;"><span style="color:#d4d4d4">    }</span></div>
<div style="position:absolute;left:0px;top:716.34px;width:80px;text-align:right;font-family:'Liberation Mono', monospace;-webkit-text-stroke-width:0.3px;font-size:26px;line-height:29.46px;letter-spacing:-1.2px;color:#858585;white-space:pre;">22<span style="letter-spacing:0">​</span></div>
<div style="position:absolute;left:132px;top:716.34px;font-family:'Liberation Mono', monospace;-webkit-text-stroke-width:0.55px;font-size:26px;line-height:29.46px;letter-spacing:-1.2px;white-space:pre;"><span style="color:#c586c0">#endif</span></div>
<div style="position:absolute;left:0px;top:752.34px;width:80px;text-align:right;font-family:'Liberation Mono', monospace;-webkit-text-stroke-width:0.3px;font-size:26px;line-height:29.46px;letter-spacing:-1.2px;color:#858585;white-space:pre;">23<span style="letter-spacing:0">​</span></div>
<div style="position:absolute;left:132px;top:752.34px;font-family:'Liberation Mono', monospace;-webkit-text-stroke-width:0.55px;font-size:26px;line-height:29.46px;letter-spacing:-1.2px;white-space:pre;"><span style="color:#d4d4d4">}</span></div>
<svg style="position:absolute;left:6px;top:249px" width="28" height="26" viewBox="0 0 28 26"><path d="M2.5 2.5 H17 L25 13 L17 23.5 H2.5 Z" fill="none" stroke="#ffcc00" stroke-width="2.6" stroke-linejoin="round"/></svg>
<div style="position:absolute;left:406px;top:550px;width:54px;height:56px;background:#252526;border:2px solid #454545;box-sizing:border-box;"></div>
<div style="position:absolute;left:419px;top:566.51px;font-family:'Liberation Mono', monospace;-webkit-text-stroke-width:0.5px;font-size:24px;line-height:27.19px;letter-spacing:-0.4px;color:#b5cea8;white-space:pre;">25</div>
</div>
<div style="position:absolute;left:608px;top:170px;width:2004px;height:10px;background:linear-gradient(rgba(0,0,0,0.55),rgba(0,0,0,0));"></div>
<div style="position:absolute;left:2620px;top:170px;width:232px;height:778px;overflow:hidden;">
<div style="position:absolute;left:0;top:32px;width:232px;height:4px;background:#264f78;opacity:0.8"></div>
<div style="position:absolute;left:0;top:-0.5px;font-family:'Liberation Mono', monospace;font-size:4px;line-height:4px;letter-spacing:-0.4px;white-space:pre;font-weight:bold;opacity:0.9"><span style="color:#6a9955">/**</span></div>
<div style="position:absolute;left:0;top:3.5px;font-family:'Liberation Mono', monospace;font-size:4px;line-height:4px;letter-spacing:-0.4px;white-space:pre;font-weight:bold;opacity:0.9"><span style="color:#6a9955"> * Copyright (c) 2020 Raspberry Pi (Trading) Ltd.</span></div>
<div style="position:absolute;left:0;top:7.5px;font-family:'Liberation Mono', monospace;font-size:4px;line-height:4px;letter-spacing:-0.4px;white-space:pre;font-weight:bold;opacity:0.9"><span style="color:#6a9955"> *</span></div>
<div style="position:absolute;left:0;top:11.5px;font-family:'Liberation Mono', monospace;font-size:4px;line-height:4px;letter-spacing:-0.4px;white-space:pre;font-weight:bold;opacity:0.9"><span style="color:#6a9955"> * SPDX-License-Identifier: BSD-3-Clause</span></div>
<div style="position:absolute;left:0;top:15.5px;font-family:'Liberation Mono', monospace;font-size:4px;line-height:4px;letter-spacing:-0.4px;white-space:pre;font-weight:bold;opacity:0.9"><span style="color:#6a9955"> */</span></div>
<div style="position:absolute;left:0;top:19.5px;font-family:'Liberation Mono', monospace;font-size:4px;line-height:4px;letter-spacing:-0.4px;white-space:pre;font-weight:bold;opacity:0.9"></div>
<div style="position:absolute;left:0;top:23.5px;font-family:'Liberation Mono', monospace;font-size:4px;line-height:4px;letter-spacing:-0.4px;white-space:pre;font-weight:bold;opacity:0.9"><span style="color:#c586c0">#include</span><span style="color:#d4d4d4"> </span><span style="color:#ce9178">&quot;pico/stdlib.h&quot;</span></div>
<div style="position:absolute;left:0;top:27.5px;font-family:'Liberation Mono', monospace;font-size:4px;line-height:4px;letter-spacing:-0.4px;white-space:pre;font-weight:bold;opacity:0.9"></div>
<div style="position:absolute;left:0;top:31.5px;font-family:'Liberation Mono', monospace;font-size:4px;line-height:4px;letter-spacing:-0.4px;white-space:pre;font-weight:bold;opacity:0.9"><span style="color:#569cd6">int</span><span style="color:#d4d4d4"> </span><span style="color:#dcdcaa">main</span><span style="color:#d4d4d4">() {</span></div>
<div style="position:absolute;left:0;top:35.5px;font-family:'Liberation Mono', monospace;font-size:4px;line-height:4px;letter-spacing:-0.4px;white-space:pre;font-weight:bold;opacity:0.9"><span style="color:#c586c0">#ifndef</span><span style="color:#d4d4d4"> </span><span style="color:#569cd6">PICO_DEFAULT_LED_PIN</span></div>
<div style="position:absolute;left:0;top:39.5px;font-family:'Liberation Mono', monospace;font-size:4px;line-height:4px;letter-spacing:-0.4px;white-space:pre;font-weight:bold;opacity:0.9"><span style="color:rgba(197,134,192,0.55)">#warning</span><span style="color:#d4d4d4"> </span><span style="color:rgba(206,145,120,0.55)">blink example requires a board with a regular LED</span></div>
<div style="position:absolute;left:0;top:43.5px;font-family:'Liberation Mono', monospace;font-size:4px;line-height:4px;letter-spacing:-0.4px;white-space:pre;font-weight:bold;opacity:0.9"><span style="color:#c586c0">#else</span></div>
<div style="position:absolute;left:0;top:47.5px;font-family:'Liberation Mono', monospace;font-size:4px;line-height:4px;letter-spacing:-0.4px;white-space:pre;font-weight:bold;opacity:0.9"><span style="color:#d4d4d4">    </span><span style="color:#569cd6">const</span><span style="color:#d4d4d4"> </span><span style="color:#4ec9b0">uint</span><span style="color:#d4d4d4"> </span><span style="color:#9cdcfe">LED_PIN</span><span style="color:#d4d4d4"> = </span><span style="color:#569cd6">PICO_DEFAULT_LED_PIN</span><span style="color:#d4d4d4">;</span></div>
<div style="position:absolute;left:0;top:51.5px;font-family:'Liberation Mono', monospace;font-size:4px;line-height:4px;letter-spacing:-0.4px;white-space:pre;font-weight:bold;opacity:0.9"><span style="color:#d4d4d4">    </span><span style="color:#dcdcaa">gpio_init</span><span style="color:#d4d4d4">(</span><span style="color:#9cdcfe">LED_PIN</span><span style="color:#d4d4d4">);</span></div>
<div style="position:absolute;left:0;top:55.5px;font-family:'Liberation Mono', monospace;font-size:4px;line-height:4px;letter-spacing:-0.4px;white-space:pre;font-weight:bold;opacity:0.9"><span style="color:#d4d4d4">    </span><span style="color:#dcdcaa">gpio_set_dir</span><span style="color:#d4d4d4">(</span><span style="color:#9cdcfe">LED_PIN</span><span style="color:#d4d4d4">, </span><span style="color:#569cd6">GPIO_OUT</span><span style="color:#d4d4d4">);</span></div>
<div style="position:absolute;left:0;top:59.5px;font-family:'Liberation Mono', monospace;font-size:4px;line-height:4px;letter-spacing:-0.4px;white-space:pre;font-weight:bold;opacity:0.9"><span style="color:#d4d4d4">    </span><span style="color:#c586c0">while</span><span style="color:#d4d4d4"> (</span><span style="color:#569cd6">true</span><span style="color:#d4d4d4">) {</span></div>
<div style="position:absolute;left:0;top:63.5px;font-family:'Liberation Mono', monospace;font-size:4px;line-height:4px;letter-spacing:-0.4px;white-space:pre;font-weight:bold;opacity:0.9"><span style="color:#d4d4d4">        </span><span style="color:#dcdcaa">gpio_put</span><span style="color:#d4d4d4">(</span><span style="color:#9cdcfe">LED_PIN</span><span style="color:#d4d4d4">, </span><span style="color:#b5cea8">1</span><span style="color:#d4d4d4">);</span></div>
<div style="position:absolute;left:0;top:67.5px;font-family:'Liberation Mono', monospace;font-size:4px;line-height:4px;letter-spacing:-0.4px;white-space:pre;font-weight:bold;opacity:0.9"><span style="color:#d4d4d4">        </span><span style="color:#dcdcaa">sleep_ms</span><span style="color:#d4d4d4">(</span><span style="color:#b5cea8">250</span><span style="color:#d4d4d4">);</span></div>
<div style="position:absolute;left:0;top:71.5px;font-family:'Liberation Mono', monospace;font-size:4px;line-height:4px;letter-spacing:-0.4px;white-space:pre;font-weight:bold;opacity:0.9"><span style="color:#d4d4d4">        </span><span style="color:#dcdcaa">gpio_put</span><span style="color:#d4d4d4">(</span><span style="color:#9cdcfe">LED_PIN</span><span style="color:#d4d4d4">, </span><span style="color:#b5cea8">0</span><span style="color:#d4d4d4">);</span></div>
<div style="position:absolute;left:0;top:75.5px;font-family:'Liberation Mono', monospace;font-size:4px;line-height:4px;letter-spacing:-0.4px;white-space:pre;font-weight:bold;opacity:0.9"><span style="color:#d4d4d4">        </span><span style="color:#dcdcaa">sleep_ms</span><span style="color:#d4d4d4">(</span><span style="color:#b5cea8">250</span><span style="color:#d4d4d4">);</span></div>
<div style="position:absolute;left:0;top:79.5px;font-family:'Liberation Mono', monospace;font-size:4px;line-height:4px;letter-spacing:-0.4px;white-space:pre;font-weight:bold;opacity:0.9"><span style="color:#d4d4d4">    }</span></div>
<div style="position:absolute;left:0;top:83.5px;font-family:'Liberation Mono', monospace;font-size:4px;line-height:4px;letter-spacing:-0.4px;white-space:pre;font-weight:bold;opacity:0.9"><span style="color:#c586c0">#endif</span></div>
<div style="position:absolute;left:0;top:87.5px;font-family:'Liberation Mono', monospace;font-size:4px;line-height:4px;letter-spacing:-0.4px;white-space:pre;font-weight:bold;opacity:0.9"><span style="color:#d4d4d4">}</span></div>
</div>
<div style="position:absolute;left:2852px;top:170px;width:2px;height:778px;background:#3b3b3b;"></div>
<div style="position:absolute;left:2854px;top:307px;width:26px;height:4px;background:#a0a0a0;"></div>
<div style="position:absolute;left:2854px;top:311px;width:26px;height:15px;background:#4b4b18;"></div>
<div style="position:absolute;left:1262px;top:56px;width:358px;height:64px;background:#333333;box-shadow:0 2px 8px rgba(0,0,0,0.6);"></div>
<svg style="position:absolute;left:1284px;top:78px;" width="14" height="22" viewBox="0 0 14 22"><g fill="#858585"><rect x="1" y="1" width="4" height="4"/><rect x="9" y="1" width="4" height="4"/><rect x="1" y="9" width="4" height="4"/><rect x="9" y="9" width="4" height="4"/><rect x="1" y="17" width="4" height="4"/><rect x="9" y="17" width="4" height="4"/></g></svg>
<svg style="position:absolute;left:1317px;top:75px;" width="26" height="30" viewBox="0 0 26 30"><g fill="none" stroke="#75beff" stroke-width="3"><path d="M2.5 1 V29"/><path d="M10 4 L23.5 14.5 L10 25 Z" stroke-linejoin="miter"/></g></svg>
<svg style="position:absolute;left:1367px;top:74px;" width="28" height="30" viewBox="0 0 28 30"><g fill="none" stroke="#75beff" stroke-width="3"><path d="M2.5 13 Q6 3 14 3 Q20 3 24 9"/><path d="M25.5 1 V12 H15"/></g><circle cx="13.5" cy="22.5" r="4" fill="#75beff"/></svg>
<svg style="position:absolute;left:1423.5px;top:73px;" width="20" height="32" viewBox="0 0 20 32"><g fill="none" stroke="#75beff" stroke-width="3"><path d="M10 1 V17 M2 9 L10 17 L18 9"/></g><circle cx="10" cy="25" r="4" fill="#75beff"/></svg>
<svg style="position:absolute;left:1475px;top:73px;" width="20" height="32" viewBox="0 0 20 32"><g fill="none" stroke="#75beff" stroke-width="3"><path d="M10 2 V18 M2 10 L10 2 L18 10"/></g><circle cx="10" cy="25" r="4" fill="#75beff"/></svg>
<svg style="position:absolute;left:1523px;top:74px;" width="28" height="28" viewBox="0 0 28 28"><g fill="none" stroke="#89d185" stroke-width="3"><path d="M4 9 A11.5 11.5 0 1 1 3 16"/><path d="M3 1.5 V10.5 H12"/></g></svg>
<svg style="position:absolute;left:1577px;top:75px;" width="26" height="26" viewBox="0 0 26 26"><rect x="2" y="2" width="22" height="22" fill="none" stroke="#f48771" stroke-width="3"/></svg>
<div style="position:absolute;left:608px;top:948px;width:2272px;height:644px;background:#1e1e1e;"></div>
<div style="position:absolute;left:608px;top:948px;width:2272px;height:2px;background:#414141;"></div>
<div style="position:absolute;left:650.85px;top:974.45px;font-family:'Liberation Sans', sans-serif;font-size:21.6px;line-height:26.03px;color:#9d9d9d;font-weight:normal;white-space:pre;letter-spacing:0.086px;">PROBLEMS</div>
<div style="position:absolute;left:819.50px;top:974.45px;font-family:'Liberation Sans', sans-serif;font-size:21.6px;line-height:26.03px;color:#9d9d9d;font-weight:normal;white-space:pre;letter-spacing:0.620px;">OUTPUT</div>
<div style="position:absolute;left:958.25px;top:974.45px;font-family:'Liberation Sans', sans-serif;font-size:21.6px;line-height:26.03px;color:#e7e7e7;font-weight:normal;white-space:pre;letter-spacing:0.250px;">DEBUG CONSOLE</div>
<div style="position:absolute;left:956px;top:1015px;width:198px;height:3px;background:#e7e7e7;"></div>
<div style="position:absolute;left:1197.50px;top:974.45px;font-family:'Liberation Sans', sans-serif;font-size:21.6px;line-height:26.03px;color:#9d9d9d;font-weight:normal;white-space:pre;letter-spacing:0.314px;">TERMINAL</div>
<div style="position:absolute;left:2100px;top:962px;width:600px;height:48px;background:#3c3c3c;"></div>
<div style="position:absolute;left:2108.40px;top:972.28px;font-family:'Liberation Sans', sans-serif;font-size:24px;line-height:28.92px;color:#a6a6a6;font-weight:normal;white-space:pre;letter-spacing:0.730px;">Filter (e.g. text, !exclude)</div>
<svg style="position:absolute;left:2716px;top:974px;" width="32" height="26" viewBox="0 0 32 26"><g fill="none" stroke="#c5c5c5" stroke-width="2.2"><path d="M1 2 H29 M1 9 H29 M1 16 H19 M1 23 H16"/><path d="M20 16 L28 24 M28 16 L20 24"/></g></svg>
<svg style="position:absolute;left:2771px;top:978px;" width="22" height="14" viewBox="0 0 22 14"><path d="M1 12.5 L11 2 L21 12.5" fill="none" stroke="#c5c5c5" stroke-width="2.2"/></svg>
<svg style="position:absolute;left:2824.5px;top:977px;" width="19" height="19" viewBox="0 0 19 19"><path d="M1 1 L18 18 M18 1 L1 18" fill="none" stroke="#c5c5c5" stroke-width="2.2"/></svg>
<div style="position:absolute;left:608px;top:1018px;width:2272px;height:539px;overflow:hidden;">
<div style="position:absolute;left:0;top:-6.2px;width:2272px;height:32px;background:#2a2d2e;"></div>
<div style="position:absolute;left:60px;top:-4.36px;font-family:'Liberation Mono', monospace;-webkit-text-stroke-width:0.55px;font-size:26px;line-height:29.46px;letter-spacing:-0.76px;color:#cca700;white-space:pre;">hardware_alarm_irq_handler () at <span style="text-decoration:underline;text-underline-offset:2px;text-decoration-thickness:2px">/Users/andre/git/Electronics/Pico/pico-sdk/src/rp2_common/hardware_timer/timer.c:127</span></div>
<div style="position:absolute;left:60px;top:27.64px;font-family:'Liberation Mono', monospace;-webkit-text-stroke-width:0.55px;font-size:26px;line-height:29.46px;letter-spacing:-0.76px;color:#cca700;white-space:pre;">127             if (timer_hw-&gt;timerawh &gt;= target_hi[alarm_num]) {</div>
<div style="position:absolute;left:60px;top:59.64px;font-family:'Liberation Mono', monospace;-webkit-text-stroke-width:0.55px;font-size:26px;line-height:29.46px;letter-spacing:-0.76px;color:#cca700;white-space:pre;">Not implemented stop reason (assuming exception): undefined</div>
<div style="position:absolute;left:60px;top:91.64px;font-family:'Liberation Mono', monospace;-webkit-text-stroke-width:0.55px;font-size:26px;line-height:29.46px;letter-spacing:-0.76px;color:#75beff;white-space:pre;">target halted due to debug-request, current mode: Thread</div>
<div style="position:absolute;left:60px;top:123.64px;font-family:'Liberation Mono', monospace;-webkit-text-stroke-width:0.55px;font-size:26px;line-height:29.46px;letter-spacing:-0.76px;color:#75beff;white-space:pre;">xPSR: 0xf1000000 pc: 0x000000ee msp: 0x20041f00</div>
<div style="position:absolute;left:60px;top:155.64px;font-family:'Liberation Mono', monospace;-webkit-text-stroke-width:0.55px;font-size:26px;line-height:29.46px;letter-spacing:-0.76px;color:#75beff;white-space:pre;">target halted due to debug-request, current mode: Thread</div>
<div style="position:absolute;left:60px;top:187.64px;font-family:'Liberation Mono', monospace;-webkit-text-stroke-width:0.55px;font-size:26px;line-height:29.46px;letter-spacing:-0.76px;color:#75beff;white-space:pre;">xPSR: 0xf1000000 pc: 0x000000ee msp: 0x20041f00</div>
<div style="position:absolute;left:60px;top:219.64px;font-family:'Liberation Mono', monospace;-webkit-text-stroke-width:0.55px;font-size:26px;line-height:29.46px;letter-spacing:-0.76px;color:#75beff;white-space:pre;">target halted due to debug-request, current mode: Thread</div>
<div style="position:absolute;left:60px;top:251.64px;font-family:'Liberation Mono', monospace;-webkit-text-stroke-width:0.55px;font-size:26px;line-height:29.46px;letter-spacing:-0.76px;color:#75beff;white-space:pre;">xPSR: 0xf1000000 pc: 0x000000ee msp: 0x20041f00</div>
<div style="position:absolute;left:60px;top:283.64px;font-family:'Liberation Mono', monospace;-webkit-text-stroke-width:0.55px;font-size:26px;line-height:29.46px;letter-spacing:-0.76px;color:#75beff;white-space:pre;">target halted due to debug-request, current mode: Thread</div>
<div style="position:absolute;left:60px;top:315.64px;font-family:'Liberation Mono', monospace;-webkit-text-stroke-width:0.55px;font-size:26px;line-height:29.46px;letter-spacing:-0.76px;color:#75beff;white-space:pre;">xPSR: 0xf1000000 pc: 0x000000ee msp: 0x20041f00</div>
<div style="position:absolute;left:60px;top:347.64px;font-family:'Liberation Mono', monospace;-webkit-text-stroke-width:0.55px;font-size:26px;line-height:29.46px;letter-spacing:-0.76px;color:#cca700;white-space:pre;">Note: automatically using hardware breakpoints for read-only addresses.</div>
<div style="position:absolute;left:60px;top:379.64px;font-family:'Liberation Mono', monospace;-webkit-text-stroke-width:0.55px;font-size:26px;line-height:29.46px;letter-spacing:-0.76px;color:#75beff;white-space:pre;">target halted due to debug-request, current mode: Thread</div>
<div style="position:absolute;left:60px;top:411.64px;font-family:'Liberation Mono', monospace;-webkit-text-stroke-width:0.55px;font-size:26px;line-height:29.46px;letter-spacing:-0.76px;color:#75beff;white-space:pre;">xPSR: 0x01000000 pc: 0x00000178 msp: 0x20041f00</div>
<div style="position:absolute;left:60px;top:443.64px;font-family:'Liberation Mono', monospace;-webkit-text-stroke-width:0.55px;font-size:26px;line-height:29.46px;letter-spacing:-0.76px;color:#cca700;white-space:pre;"></div>
<div style="position:absolute;left:60px;top:475.64px;font-family:'Liberation Mono', monospace;-webkit-text-stroke-width:0.55px;font-size:26px;line-height:29.46px;letter-spacing:-0.76px;color:#cca700;white-space:pre;">Thread 1 hit Temporary breakpoint 1, main () at /Users/andre/git/Electronics/Pico/pico-examples/blink/blink.c:9</div>
<div style="position:absolute;left:60px;top:507.64px;font-family:'Liberation Mono', monospace;-webkit-text-stroke-width:0.55px;font-size:26px;line-height:29.46px;letter-spacing:-0.76px;color:#cca700;white-space:pre;">9       int main() {</div>
</div>
<div style="position:absolute;left:608px;top:1018px;width:2272px;height:8px;background:linear-gradient(rgba(0,0,0,0.45),rgba(0,0,0,0));"></div>
<div style="position:absolute;left:2860px;top:1146px;width:20px;height:411px;background:#424242;"></div>
<div style="position:absolute;left:608px;top:1556px;width:2272px;height:2px;background:#414141;"></div>
<svg style="position:absolute;left:634px;top:1565px;" width="14" height="23" viewBox="0 0 14 23"><path d="M1.8 1.5 L11.5 11.5 L1.8 21.5" fill="none" stroke="#c5c5c5" stroke-width="2.8"/></svg>
<div style="position:absolute;left:0px;top:1592px;width:2880px;height:44px;background:#cc6633;"></div>
<svg style="position:absolute;left:34px;top:1600px;" width="24" height="30" viewBox="0 0 24 30"><g fill="none" stroke="#ffffff" stroke-width="2"><circle cx="3.8" cy="4.3" r="3.2"/><circle cx="3.8" cy="23.4" r="3.2"/><circle cx="16" cy="9.4" r="3.2"/><path d="M3.8 7.5 V20.2 M15.5 12.6 Q14.5 16.5 9 16.5 Q3.8 16.5 3.8 20.5"/></g></svg>
<div style="position:absolute;left:63.70px;top:1599.28px;font-family:'Liberation Sans', sans-serif;font-size:24px;line-height:28.92px;color:#ffffff;font-weight:normal;white-space:pre;letter-spacing:1.050px;">master</div>
<svg style="position:absolute;left:173px;top:1601px;" width="32" height="26" viewBox="0 0 32 26"><g fill="none" stroke="#ffffff" stroke-width="2"><path d="M6 13.5 A9.5 9.5 0 0 1 24.5 11"/><path d="M21 8.5 L25 12.5 L29 8.5"/><path d="M25 15.5 A9.5 9.5 0 0 1 6.5 16.5"/><path d="M2.5 18 L6.5 14 L10.5 18"/></g></svg>
<svg style="position:absolute;left:235.5px;top:1601px;" width="26" height="26" viewBox="0 0 26 26"><g fill="none" stroke="#ffffff" stroke-width="2"><circle cx="13" cy="13" r="11"/><path d="M8.8 8.8 L17.2 17.2 M17.2 8.8 L8.8 17.2"/></g></svg>
<div style="position:absolute;left:270.30px;top:1599.28px;font-family:'Liberation Sans', sans-serif;font-size:24px;line-height:28.92px;color:#ffffff;font-weight:normal;white-space:pre;">0</div>
<svg style="position:absolute;left:292px;top:1600.5px;" width="26" height="25" viewBox="0 0 26 25"><g fill="none" stroke="#ffffff" stroke-width="2" stroke-linejoin="miter"><path d="M13 1.8 L24.5 23 H1.5 Z"/><path d="M13 8.5 V16"/></g><rect x="11.9" y="18" width="2.2" height="2.4" fill="#ffffff"/></svg>
<div style="position:absolute;left:326.90px;top:1599.28px;font-family:'Liberation Sans', sans-serif;font-size:24px;line-height:28.92px;color:#ffffff;font-weight:normal;white-space:pre;">0</div>
<svg style="position:absolute;left:371px;top:1601px;" width="30" height="29" viewBox="0 0 30 29"><g fill="none" stroke="#ffffff" stroke-width="2"><path d="M11.5 13 V2.5 L28 12 L20 17"/><path d="M4.5 22 Q4.5 15.5 8.5 15.5 Q12.5 15.5 12.5 22 Q12.5 27 8.5 27 Q4.5 27 4.5 22 Z M5 19 H12"/><path d="M1.5 22.5 H4.5 M12.5 22.5 H15.5 M2 16 L5 18.5 M15 16 L12 18.5 M2 28 L5 25.5 M15 28 L12 25.5"/></g></svg>
<div style="position:absolute;left:407.00px;top:1599.28px;font-family:'Liberation Sans', sans-serif;font-size:24px;line-height:28.92px;color:#ffffff;font-weight:normal;white-space:pre;letter-spacing:0.824px;">Pico Debug (pico-examples)</div>
<svg style="position:absolute;left:762px;top:1601px;" width="26" height="26" viewBox="0 0 26 26"><g fill="none" stroke="#ffffff" stroke-width="2"><circle cx="13" cy="13" r="11"/><path d="M13 10.5 V19"/></g><circle cx="13" cy="7.2" r="1.5" fill="#ffffff"/></svg>
<div style="position:absolute;left:795.65px;top:1599.28px;font-family:'Liberation Sans', sans-serif;font-size:24px;line-height:28.92px;color:#ffffff;font-weight:normal;white-space:pre;letter-spacing:0.580px;">CMake: [Debug]: Ready</div>
<svg style="position:absolute;left:1097px;top:1601px;" width="28" height="27" viewBox="0 0 28 27"><g fill="none" stroke="#ffffff" stroke-width="1.9" stroke-linejoin="round"><path d="M2.5 4.5 L4.5 2.5 L8.5 4.5 L14 10 L10 14 L4.5 8.5 Z"/><path d="M15.5 17 L17 15.5 L24.5 23 Q25.2 24 24.3 24.8 L24 25.1 Q23 26 22 25.2 L14.5 17.8 Z"/><path d="M13 11.8 A6 6 0 0 1 20.8 2.3 L17.8 5.5 L18.3 8.6 L21.4 9.1 L24.6 6 A6 6 0 0 1 15.2 14 M13 11.8 L3 21.8 Q2 23.2 3.2 24.4 Q4.5 25.5 5.6 24.4 L15.2 14"/></g></svg>
<div style="position:absolute;left:1131.25px;top:1599.28px;font-family:'Liberation Sans', sans-serif;font-size:24px;line-height:28.92px;color:#ffffff;font-weight:normal;white-space:pre;letter-spacing:0.692px;">[GCC 9.2.1 arm-none-eabi]</div>
<div style="position:absolute;left:1469.65px;top:1599.28px;font-family:'Liberation Sans', sans-serif;font-size:24px;line-height:28.92px;color:#ffffff;font-weight:normal;white-space:pre;letter-spacing:1.492px;">[blink]</div>
<div style="position:absolute;left:2172.50px;top:1599.78px;font-family:'Liberation Sans', sans-serif;font-size:24px;line-height:28.92px;color:#ffffff;font-weight:normal;white-space:pre;letter-spacing:0.400px;">Ln 9, Col 1</div>
<div style="position:absolute;left:2324.00px;top:1599.78px;font-family:'Liberation Sans', sans-serif;font-size:24px;line-height:28.92px;color:#ffffff;font-weight:normal;white-space:pre;letter-spacing:0.594px;">Spaces: 4</div>
<div style="position:absolute;left:2466.75px;top:1599.78px;font-family:'Liberation Sans', sans-serif;font-size:24px;line-height:28.92px;color:#ffffff;font-weight:normal;white-space:pre;letter-spacing:1.763px;">UTF-8</div>
<div style="position:absolute;left:2572.50px;top:1599.78px;font-family:'Liberation Sans', sans-serif;font-size:24px;line-height:28.92px;color:#ffffff;font-weight:normal;white-space:pre;letter-spacing:0.500px;">LF</div>
<div style="position:absolute;left:2633.80px;top:1599.78px;font-family:'Liberation Sans', sans-serif;font-size:24px;line-height:28.92px;color:#ffffff;font-weight:normal;white-space:pre;">C</div>
<div style="position:absolute;left:2680.80px;top:1599.78px;font-family:'Liberation Sans', sans-serif;font-size:24px;line-height:28.92px;color:#ffffff;font-weight:normal;white-space:pre;letter-spacing:1.850px;">Mac</div>
<svg style="position:absolute;left:2763px;top:1601px;" width="27" height="27" viewBox="0 0 27 27"><g fill="none" stroke="#ffffff" stroke-width="2"><circle cx="9.5" cy="12" r="4.5"/><path d="M1 26 Q2 18 9.5 18 Q14 18 16 21 M13 6 V1 H25.5 V11 H20.5 L17.5 14"/></g></svg>
<svg style="position:absolute;left:2825px;top:1602px;" width="22" height="26" viewBox="0 0 22 26"><g fill="none" stroke="#ffffff" stroke-width="2"><path d="M3.5 19 V10 A7.5 7.5 0 0 1 18.5 10 V19 L20.5 21 H1.5 Z"/><path d="M8.5 23.5 Q11 25.5 13.5 23.5"/></g></svg>
</div></body></html>
